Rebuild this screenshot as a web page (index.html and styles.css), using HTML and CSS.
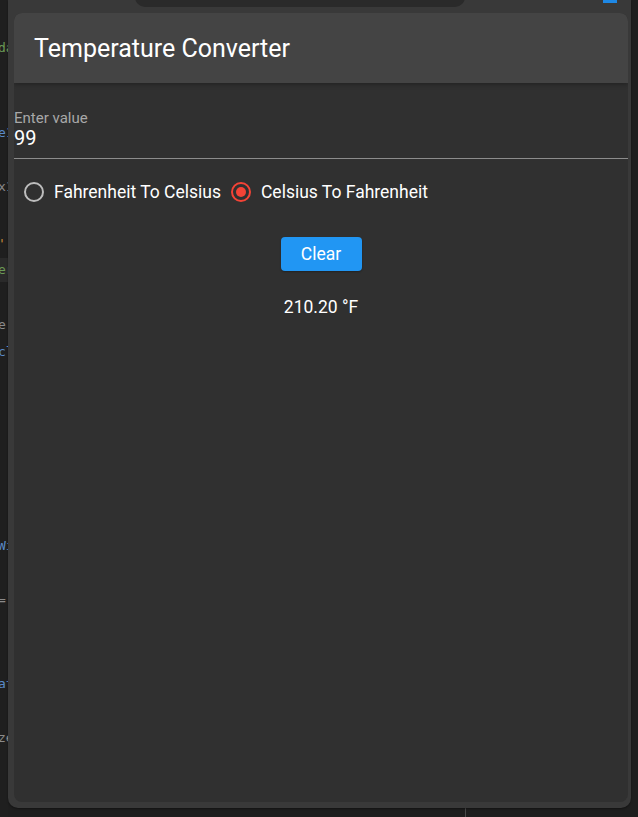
FILE: index.html
```html
<!DOCTYPE html>
<html>
<head>
<meta charset="utf-8">
<link rel="stylesheet" href="styles.css">
</head>
<body>
<div class="desktop">
  <div class="ide">
    <span class="code g" style="top:40px">da</span>
    <span class="code b" style="top:125px">e1</span>
    <span class="code w" style="top:179px">x1</span>
    <span class="code o" style="top:236px">'</span>
    <div class="hl"></div>
    <span class="code g" style="top:262px">er</span>
    <span class="code w" style="top:317px">e</span>
    <span class="code b" style="top:344px">cl</span>
    <span class="code b" style="top:538px">Wi</span>
    <span class="code w" style="top:592px">=:</span>
    <span class="code b" style="top:676px">at</span>
    <span class="code w" style="top:730px">ze</span>
  </div>
  <div class="pill"></div>
  <div class="bluemark"></div>
  <div class="vline"></div>

  <div class="window">
    <div class="panel">
      <header class="appbar">
        <h1 class="title">Temperature Converter</h1>
      </header>
      <main class="content">
        <div class="field">
          <label class="field-label">Enter value</label>
          <div class="field-value">99</div>
        </div>
        <div class="radios">
          <label class="radio">
            <span class="radio-circle"></span>
            <span class="radio-text">Fahrenheit To Celsius</span>
          </label>
          <label class="radio checked">
            <span class="radio-circle"><span class="dot"></span></span>
            <span class="radio-text">Celsius To Fahrenheit</span>
          </label>
        </div>
        <div class="actions">
          <button class="btn">Clear</button>
        </div>
        <div class="result">210.20 °F</div>
      </main>
    </div>
  </div>
</div>
</body>
</html>
```
FILE: styles.css
```css
html, body {
  margin: 0;
  padding: 0;
  background: #1e1e1e;
  overflow: hidden;
}
.desktop {
  position: relative;
  width: 638px;
  height: 817px;
  font-family: Roboto, "Noto Sans", sans-serif;
}
.ide {
  position: absolute;
  left: 0;
  top: 0;
  width: 8px;
  height: 817px;
  background: #1f1f1f;
  overflow: hidden;
}
.hl {
  position: absolute;
  left: 0;
  top: 258px;
  width: 8px;
  height: 24px;
  background: #2a2a2a;
}
.code {
  position: absolute;
  left: -2px;
  font-family: "DejaVu Sans Mono", monospace;
  font-size: 13px;
  line-height: 16px;
  z-index: 1;
}
.code.g { color: #6a9955; }
.code.b { color: #5a8ac8; }
.code.w { color: #8a8a8a; }
.code.o { color: #c88a3a; }
.pill {
  position: absolute;
  left: 135px;
  top: -10px;
  width: 330px;
  height: 17px;
  background: #2a2a2a;
  border-radius: 0 0 10px 10px;
  z-index: 2;
}
.bluemark {
  position: absolute;
  left: 603px;
  top: 0;
  width: 14px;
  height: 3px;
  background: #1e88e5;
  z-index: 2;
}
.vline {
  position: absolute;
  left: 465px;
  top: 806px;
  width: 1px;
  height: 11px;
  background: #4a4a4a;
}
.window {
  position: absolute;
  left: 8px;
  top: 0;
  width: 623px;
  height: 808px;
  box-sizing: border-box;
  padding: 13px 3px 6px 6px;
  background: #393939;
  border-radius: 0 0 10px 10px;
  box-shadow: 0 1px 2px rgba(0,0,0,0.4);
}
.panel {
  height: 100%;
  background: #303030;
  border-radius: 8px;
  overflow: hidden;
  display: flex;
  flex-direction: column;
}
.appbar {
  height: 70px;
  flex: none;
  background: #444444;
  display: flex;
  align-items: center;
  padding-left: 20px;
  box-shadow: 0 2px 4px rgba(0,0,0,0.25);
}
.title {
  margin: 0;
  font-size: 25px;
  font-weight: 400;
  color: #ffffff;
  padding-top: 1px;
}
.content {
  display: flex;
  flex-direction: column;
  padding-top: 27px;
}
.field {
  display: flex;
  flex-direction: column;
  border-bottom: 1px solid #8c8c8c;
  padding-bottom: 9px;
}
.field-label {
  font-size: 15px;
  line-height: 17px;
  color: #a8a8a8;
}
.field-value {
  font-size: 20px;
  line-height: 22px;
  color: #ffffff;
}
.radios {
  display: flex;
  align-items: center;
  gap: 10px;
  padding: 23px 0 0 10px;
}
.radio {
  display: flex;
  align-items: center;
  gap: 10px;
  font-size: 17.5px;
  color: #ffffff;
}
.radio-circle {
  width: 20px;
  height: 20px;
  box-sizing: border-box;
  border: 2px solid #bdbdbd;
  border-radius: 50%;
  display: flex;
  align-items: center;
  justify-content: center;
}
.radio.checked .radio-circle {
  border-color: #f44336;
}
.dot {
  width: 10px;
  height: 10px;
  border-radius: 50%;
  background: #f44336;
}
.radio-text {
  line-height: 20px;
}
.actions {
  display: flex;
  justify-content: center;
  padding-top: 35px;
}
.btn {
  font-family: Roboto, sans-serif;
  font-size: 17.5px;
  color: #ffffff;
  background: #2196f3;
  border: none;
  border-radius: 4px;
  width: 81px;
  height: 34px;
  padding: 0;
  box-shadow: 0 1px 2px rgba(0,0,0,0.3);
}
.result {
  text-align: center;
  font-size: 17.5px;
  line-height: 21px;
  color: #ffffff;
  padding-top: 26px;
}
```
